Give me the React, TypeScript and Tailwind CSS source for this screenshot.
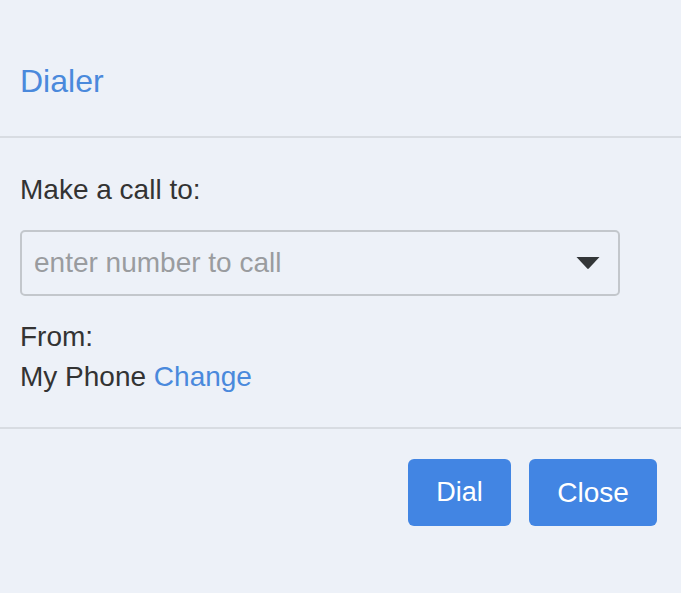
import { useState } from "react";

const Caret = () => (
  <svg width="26" height="14" viewBox="0 0 26 14" className="shrink-0">
    <path d="M1.5 1 H24.5 L13.8 12.6 Q13 13.4 12.2 12.6 Z" fill="#333638" />
  </svg>
);

const App = () => {
  const [number, setNumber] = useState("");

  return (
    <div
      className="min-h-screen w-full bg-[#edf1f8] text-[#333] text-[28px]"
      style={{ fontFamily: '"Liberation Sans", Arial, sans-serif' }}
    >
      {/* Header */}
      <header className="h-[138px] border-b-2 border-[#d8dce2] px-5 pt-[62px]">
        <h1 className="text-[32px] leading-[38px] text-[#4a89dc] font-normal">Dialer</h1>
      </header>

      {/* Body */}
      <main className="px-5 pt-[32px] pb-[30px] border-b-2 border-[#d8dce2]">
        <label className="block leading-[40px]">Make a call to:</label>
        <div className="mt-[20px] w-[600px] h-[66px] flex items-center justify-between border-2 border-[#c3c7cc] rounded-[5px] pl-[12px] pr-[17px]">
          <input
            value={number}
            onChange={(e) => setNumber(e.target.value)}
            placeholder="enter number to call"
            className="flex-1 bg-transparent outline-none placeholder:text-[#9a9c9f] text-[28px]"
          />
          <Caret />
        </div>
        <div className="mt-[21px] leading-[40px]">From:</div>
        <div className="leading-[40px]">
          My Phone <a className="text-[#4a89dc] cursor-pointer">Change</a>
        </div>
      </main>

      {/* Footer */}
      <footer className="flex justify-end gap-[18px] pt-[30px] pr-[24px]">
        <button className="w-[103px] h-[67px] rounded-[6px] bg-[#4285e3] text-white text-[27px]">
          Dial
        </button>
        <button className="w-[128px] h-[67px] rounded-[6px] bg-[#4285e3] text-white text-[28px]">
          Close
        </button>
      </footer>
    </div>
  );
};

export default App;
